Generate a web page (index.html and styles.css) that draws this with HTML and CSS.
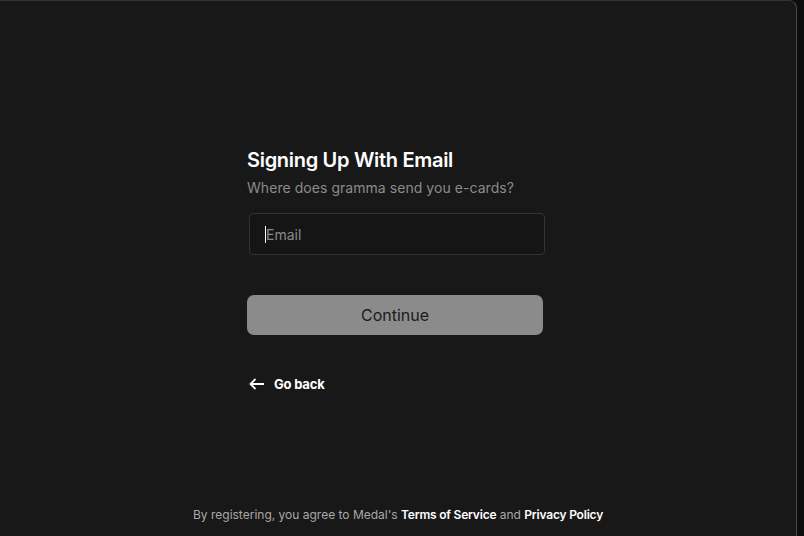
FILE: index.html
```html
<!DOCTYPE html>
<html lang="en">
<head>
  <meta charset="UTF-8" />
  <title>Sign up with email</title>
  <link rel="stylesheet" href="styles.css">
</head>
<body>
  <div class="panel">
    <div class="signup">
      <h1>Signing Up With Email</h1>
      <p class="subtitle">Where does gramma send you e-cards?</p>
      <div class="field">
        <span class="caret"></span>
        <input type="email" placeholder="Email" />
      </div>
      <button class="continue">Continue</button>
      <a class="go-back" href="#">
        <svg viewBox="0 0 16 12" width="16" height="12"><path d="M15 6H1.5M6.5 1L1.5 6l5 5"/></svg>
        Go back
      </a>
    </div>
    <p class="terms">By registering, you agree to Medal's <a href="#">Terms of Service</a> and <a href="#">Privacy Policy</a></p>
  </div>
</body>
</html>
```

FILE: styles.css
```css
* { box-sizing: border-box; }
html, body { height: 100%; }
body {
  margin: 0;
  background: #0c0c0c;
  font-family: 'Inter', 'Noto Sans', sans-serif;
  color: #fff;
  overflow: hidden;
}
.panel {
  width: 797px;
  height: 100%;
  background: #181818;
  border-top: 1px solid #333;
  border-right: 1px solid #474747;
  border-top-right-radius: 8px;
  display: flex;
  flex-direction: column;
}
.signup {
  display: flex;
  flex-direction: column;
  align-items: flex-start;
  width: 298px;
  margin-left: 247px;
  padding-top: 147px;
}
h1 {
  margin: 0;
  font-size: 20px;
  line-height: 24px;
  font-weight: 600;
  letter-spacing: -0.3px;
}
.subtitle {
  margin: 6px 0 0;
  font-size: 14px;
  line-height: 20px;
  color: #8b8b8b;
  letter-spacing: 0.05px;
}
.field {
  position: relative;
  margin: 15px 0 0 2px;
  width: 296px;
}
.field input {
  width: 100%;
  height: 42px;
  background: #151515;
  border: 1px solid #333;
  border-radius: 4px;
  padding: 0 16px;
  font-family: inherit;
  font-size: 14px;
  color: #fff;
  outline: none;
}
.field input::placeholder { color: #8a8a8a; }
.caret {
  position: absolute;
  left: 16px;
  top: 13px;
  width: 1px;
  height: 17px;
  background: #fff;
}
.continue {
  margin-top: 40px;
  width: 296px;
  height: 40px;
  border: none;
  border-radius: 7px;
  background: #8b8b8b;
  color: #1c1c1c;
  font-family: inherit;
  font-size: 16px;
}
.go-back {
  display: flex;
  align-items: center;
  gap: 9px;
  margin: 41px 0 0 2px;
  color: #fff;
  text-decoration: none;
  font-size: 13px;
  font-weight: 700;
  letter-spacing: -0.2px;
}
.go-back svg {
  fill: none;
  stroke: #fff;
  stroke-width: 1.8;
}
.terms {
  margin: auto 0 0;
  padding-bottom: 12px;
  text-align: center;
  font-size: 12px;
  line-height: 18px;
  color: #a8a8a8;
}
.terms a {
  color: #fff;
  font-weight: 600;
  letter-spacing: -0.2px;
  text-decoration: none;
}
```
